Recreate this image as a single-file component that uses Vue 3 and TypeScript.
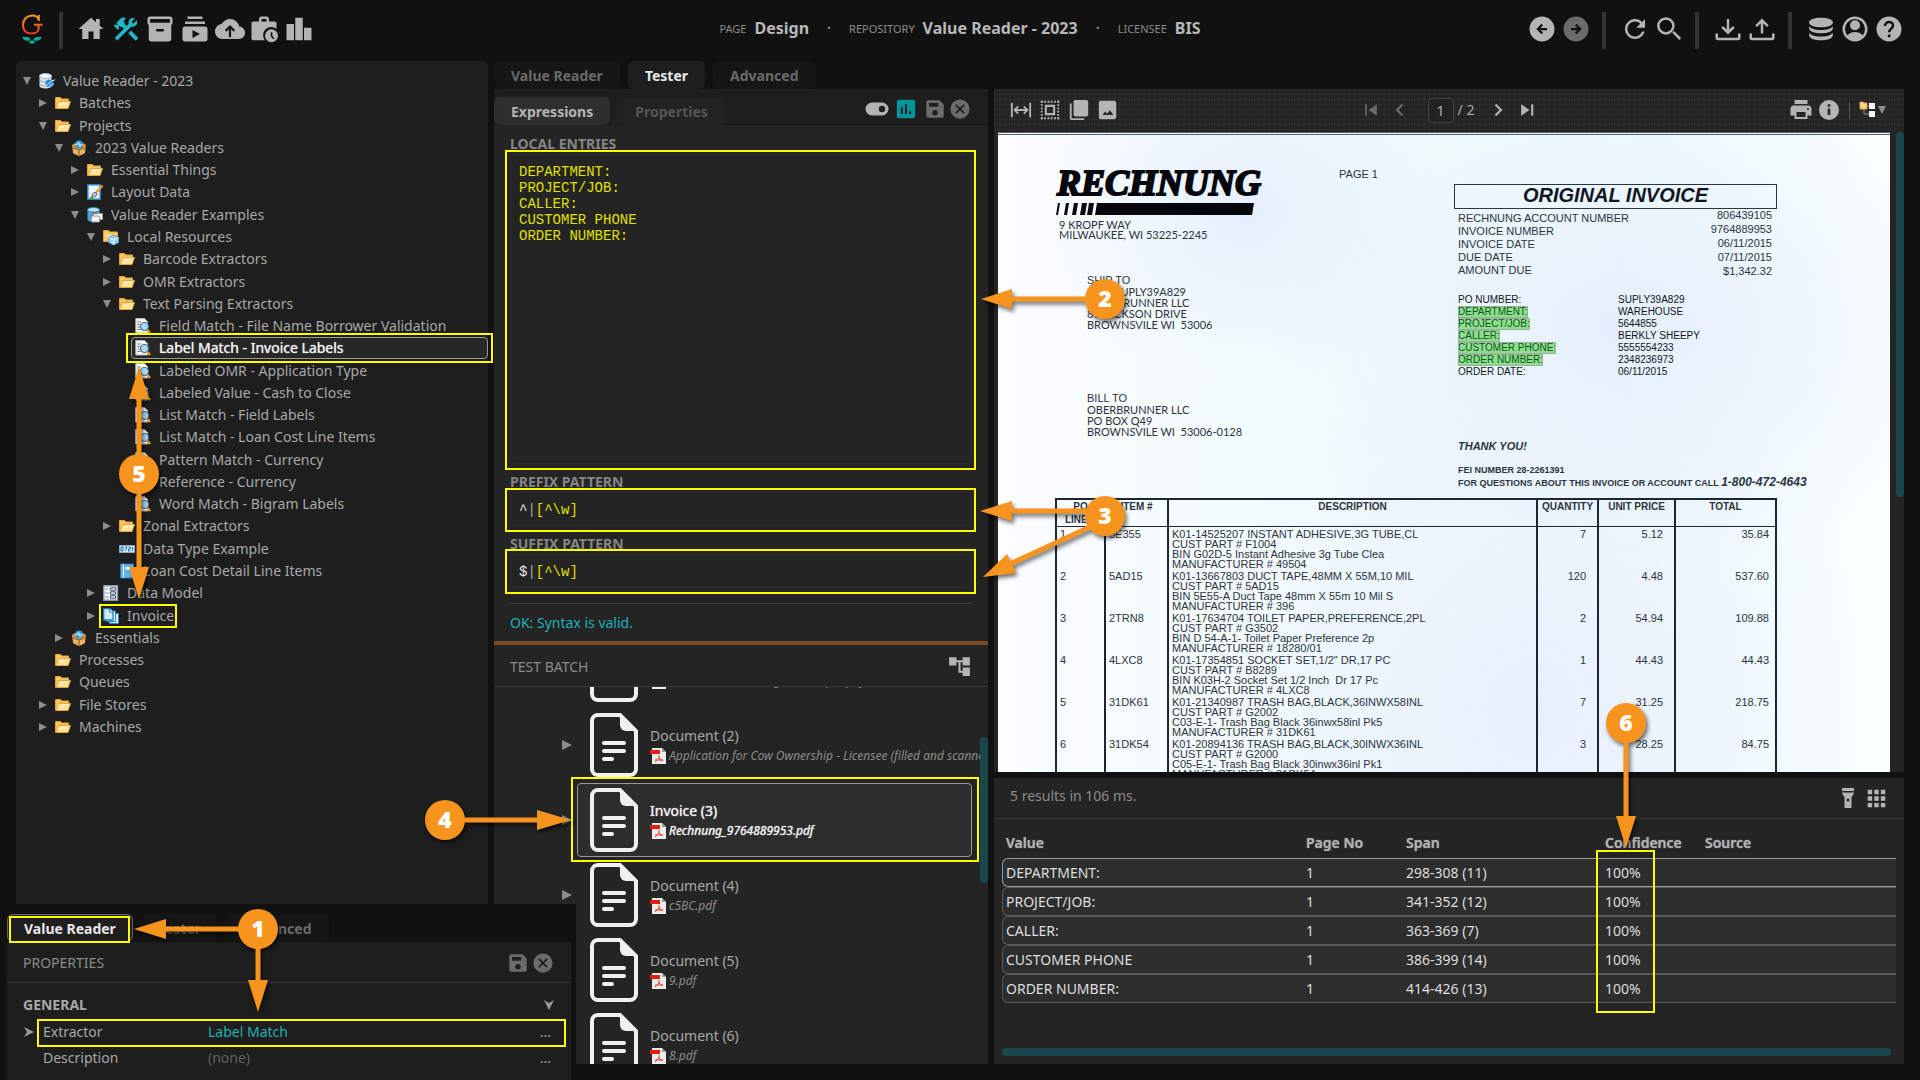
<script setup lang="ts">
import { ref } from 'vue'

interface TreeNode {
  label: string
  level: number
  icon: string
  state?: 'open' | 'closed'
  selected?: boolean
}

const tree: TreeNode[] = [
  { label: 'Value Reader - 2023', level: 0, icon: 'repo', state: 'open' },
  { label: 'Batches', level: 1, icon: 'folder', state: 'closed' },
  { label: 'Projects', level: 1, icon: 'folder', state: 'open' },
  { label: '2023 Value Readers', level: 2, icon: 'box', state: 'open' },
  { label: 'Essential Things', level: 3, icon: 'folder', state: 'closed' },
  { label: 'Layout Data', level: 3, icon: 'paint', state: 'closed' },
  { label: 'Value Reader Examples', level: 3, icon: 'model', state: 'open' },
  { label: 'Local Resources', level: 4, icon: 'local', state: 'open' },
  { label: 'Barcode Extractors', level: 5, icon: 'folder', state: 'closed' },
  { label: 'OMR Extractors', level: 5, icon: 'folder', state: 'closed' },
  { label: 'Text Parsing Extractors', level: 5, icon: 'folder', state: 'open' },
  { label: 'Field Match - File Name Borrower Validation', level: 6, icon: 'reader' },
  { label: 'Label Match - Invoice Labels', level: 6, icon: 'reader', selected: true },
  { label: 'Labeled OMR - Application Type', level: 6, icon: 'reader' },
  { label: 'Labeled Value - Cash to Close', level: 6, icon: 'reader' },
  { label: 'List Match - Field Labels', level: 6, icon: 'reader' },
  { label: 'List Match - Loan Cost Line Items', level: 6, icon: 'reader' },
  { label: 'Pattern Match - Currency', level: 6, icon: 'reader' },
  { label: 'Reference - Currency', level: 6, icon: 'reader' },
  { label: 'Word Match - Bigram Labels', level: 6, icon: 'reader' },
  { label: 'Zonal Extractors', level: 5, icon: 'folder', state: 'closed' },
  { label: 'Data Type Example', level: 5, icon: 'digits' },
  { label: 'Loan Cost Detail Line Items', level: 5, icon: 'book' },
  { label: 'Data Model', level: 4, icon: 'form', state: 'closed' },
  { label: 'Invoice', level: 4, icon: 'pages', state: 'closed' },
  { label: 'Essentials', level: 2, icon: 'box', state: 'closed' },
  { label: 'Processes', level: 1, icon: 'folder' },
  { label: 'Queues', level: 1, icon: 'folder' },
  { label: 'File Stores', level: 1, icon: 'folder', state: 'closed' },
  { label: 'Machines', level: 1, icon: 'folder', state: 'closed' },
]

const treeArt: Record<string, string> = {
  folder:
    '<path d="M.5 13.5v-11h5l1 1.500h7v3" fill="#f7c75a" stroke="#e9a23b"/><path d="M3.500 6.500h12l-2.500 7H.8z" fill="#ffe39a" stroke="#e9a23b"/><path d="M5 9.500l3-.5 2-1.500h4" stroke="#fff6d8" fill="none"/>',
  repo:
    '<path d="M.5 3v10c0 3.300 12 3.300 12 0V3" fill="#dde4ec"/><ellipse cx="6.500" cy="3" rx="6" ry="2.500" fill="#f5f8fb" stroke="#aab4c0"/><path d="M.5 7c1 2.500 11 2.500 12 0M.5 11c1 2.500 8 2.500 9 1.500" stroke="#9aa6b4" fill="none"/><circle cx="10.500" cy="10.500" r="4" fill="#2e8bd8"/><path d="M7 13l7-6M9 14.500l6-4M14 8l2-1.500M7 13l-1 2" stroke="#d8ecfb" fill="none"/>',
  box:
    '<path d="M1 5l3-2 4 3 4-3 3 2-1 8-6 3-6-3z" fill="#d9953d"/><path d="M2 8l6 2 6-2v5l-6 3-6-3z" fill="#e9b266"/><path d="M8 10v6M2 8l6 2 6-2" stroke="#8f5a1c" fill="none"/><circle cx="8" cy="4.500" r="4" fill="#2c9be0"/><path d="M4.500 4.500h2l1-2 1.500 4 1-2h1.500" stroke="#fff" fill="none"/>',
  paint:
    '<path d="M.8.8h12.400v14.400H.8z" fill="#eef7ff" stroke="#2384c6" stroke-width="1.500"/><path d="M15.500 1.500L8 10" stroke="#e89a2a" stroke-width="2.400"/><path d="M8.500 8.500c-2.500 0-3.500 2-4 4.500 3 0 5-.5 5.500-3z" fill="#bcd0dd" stroke="#557"/><path d="M1 15l3.500-3 3 3z" fill="#53b32b"/>',
  model:
    '<path d="M.5 2.500v10c0 3 12 3 12 0v-10" fill="#4aa7dd"/><ellipse cx="6.500" cy="2.800" rx="6" ry="2.300" fill="#bde2f6" stroke="#2a86bf"/><path d="M6.500 6.500h9v6h-9z" fill="#fff" stroke="#999"/><path d="M4.500 9h8v6h-8z" fill="#f2f2f2" stroke="#999"/><path d="M5 7.500l3-1.500 2 1" stroke="#e03c2c" fill="none"/>',
  local:
    '<path d="M.5 12.500v-11h5l1 1.500h8v9.500z" fill="#f9cc63" stroke="#e9a23b"/><path d="M2 6.500h11" stroke="#fff0bf"/><path d="M5.500 8.500l5-2.500 5 2.500v5l-5 2.500-5-2.500z" fill="#9fd0f3" stroke="#4d9ad4"/><path d="M5.500 8.500l5 2.500 5-2.500M10.500 11v5" stroke="#e8f5ff" fill="none"/>',
  reader:
    '<path d="M.8.5h8.700l3 3v11.500H.8z" fill="#f4f4f4" stroke="#b5b5b5"/><path d="M2.500 4h3M2.500 6.500h2.500M2.500 9h2.500M2.500 11.500h3" stroke="#6f7780"/><circle cx="9.500" cy="8.500" r="4" fill="#a9dbf7" stroke="#4c6f86" stroke-width="1.200"/><path d="M12.500 12l2.500 3" stroke="#f39a1f" stroke-width="2.400"/>',
  digits:
    '<path d="M.5 4.500h15v7H.5z" fill="#dcecfa" stroke="#8aa9c6"/><path d="M2 6h2v4H2zM5.500 6H8L6.500 10M9.500 6h1.800v2H9.500v2h2M13.500 6v4" stroke="#1c6fb4" fill="none"/>',
  book:
    '<path d="M1.500 1h13v14h-13z" fill="#5fb4ee" stroke="#2579bd"/><path d="M4.500 1v14" stroke="#fff"/><path d="M6.500 4h7v2.500h-7z" fill="#fff"/>',
  form:
    '<path d="M.8.8h13.700v14.400H.8z" fill="#f3f5f9" stroke="#8b97ae" stroke-width="1.400"/><path d="M2.500 4h3M2.500 8h3M2.500 12h3" stroke="#7a869c"/><path d="M7.500 2.800h5v2.400h-5zM7.500 6.800h5v2.400h-5zM7.500 10.800h5v2.400h-5z" fill="#fff" stroke="#3b4a66"/>',
  pages:
    '<path d="M6.500 5.500h9v10h-9z" fill="#dff0fb" stroke="#2384c6"/><path d="M3.500 3h9v10.500h-9z" fill="#e9f5fd" stroke="#2384c6"/><path d="M.7.7h6.300l3 3v8.300H.7z" fill="#d3eafa" stroke="#1d7cc0" stroke-width="1.300"/><path d="M6.500.7V4H10" stroke="#1d7cc0" fill="#fff"/>',
}

const navIcons = [
  { name: 'Home', art: '<path d="M10 20v-6h4v6h5v-8h3l-3-2.700V4h-3v2.600L12 3 2 12h3v8z"/>' },
  {
    name: 'Design',
    active: true,
    art: '<path d="M13.780 15.300L19.780 21.300L21.890 19.140L15.890 13.140L13.780 15.300M17.500 10.100C17.110 10.100 16.690 10.050 16.360 9.910L4.970 21.250L2.860 19.140L10.270 11.740L8.500 9.960L7.780 10.660L6.330 9.250V12.110L5.630 12.810L2.110 9.250L2.810 8.550H5.620L4.220 7.140L7.780 3.580C8.950 2.410 10.830 2.410 12 3.580L9.890 5.740L11.300 7.140L10.590 7.850L12.380 9.630L14.200 7.750C14.060 7.420 14 7 14 6.630C14 4.660 15.560 3.110 17.500 3.110C18.090 3.110 18.610 3.250 19.080 3.530L16.410 6.200L17.910 7.700L20.580 5.030C20.860 5.500 21 6 21 6.630C21 8.550 19.450 10.100 17.500 10.100Z"/>',
  },
  {
    name: 'Batches',
    art: '<path d="M20 2H4c-1 0-2 .9-2 2v3.010c0 .72.43 1.340 1 1.690V20c0 1.100 1.100 2 2 2h14c.9 0 2-.9 2-2V8.700c.57-.35 1-.97 1-1.690V4c0-1.100-1-2-2-2zm-5 12H9v-2h6v2zm5-7H4V4l16-.02V7z"/>',
  },
  {
    name: 'Tasks',
    art: '<path d="M20 8H4V6h16v2zm-2-6H6v2h12V2zm4 10v8c0 1.100-.9 2-2 2H4c-1.100 0-2-.9-2-2v-8c0-1.100.9-2 2-2h16c1.100 0 2 .9 2 2zm-6 4l-6-3.270v6.530L16 16z"/>',
  },
  {
    name: 'Imports',
    art: '<path d="M19.350 10.040C18.670 6.590 15.640 4 12 4 9.110 4 6.600 5.640 5.350 8.040 2.340 8.360 0 10.910 0 14c0 3.310 2.690 6 6 6h13c2.760 0 5-2.240 5-5 0-2.640-2.050-4.780-4.650-4.960z"/><path d="M12 18.500v-7.500M8.500 13.500L12 10l3.500 3.500" fill="none" stroke="#111" stroke-width="1.700"/>',
  },
  {
    name: 'Jobs',
    art: '<path d="M3.500 6H8V4c0-1.100.9-2 2-2h4c1.100 0 2 .9 2 2v2h4.500c1 0 1.500.7 1.500 1.500V12a6.500 6.500 0 0 0-9.300 9H3.500C2.600 21 2 20.400 2 19.500v-12C2 6.600 2.600 6 3.500 6zM10 4v2h4V4z" fill-rule="evenodd"/><path d="M18 12.200a5.200 5.200 0 1 0 0 10.400 5.200 5.200 0 0 0 0-10.400zm-.6 2.300h1.300v3l1.700 1.800-.9.900-2.100-2.200z" fill-rule="evenodd"/>',
  },
  { name: 'Stats', art: '<path d="M2 8h6v13H2zM9 3h6v18H9zM16 11h6v10h-6z"/>' },
]

const art: Record<string, string> = {
  back: '<path d="M12 2a10 10 0 1 0 0 20 10 10 0 0 0 0-20z"/><path d="M16 12H9m3.200-3.500L8.700 12l3.500 3.500" fill="none" stroke="#111" stroke-width="1.800"/>',
  forward:
    '<path d="M12 2a10 10 0 1 0 0 20 10 10 0 0 0 0-20z"/><path d="M8 12h7m-3.200-3.500l3.500 3.500-3.500 3.500" fill="none" stroke="#111" stroke-width="1.800"/>',
  refresh:
    '<path d="M17.650 6.350C16.200 4.900 14.210 4 12 4c-4.420 0-7.990 3.580-7.990 8s3.570 8 7.990 8c3.730 0 6.840-2.550 7.730-6h-2.080c-.82 2.330-3.040 4-5.650 4-3.310 0-6-2.690-6-6s2.690-6 6-6c1.660 0 3.140.69 4.220 1.780L13 11h7V4l-2.350 2.350z"/>',
  search: '<path d="M15.300 14.300L21 20M9.500 3.500a6 6 0 1 0 0 12 6 6 0 0 0 0-12z" fill="none" stroke="currentColor" stroke-width="2"/>',
  download:
    '<path d="M3 15.500v3.500c0 .6.4 1 1 1h16c.6 0 1-.4 1-1v-3.500M12 4v10.500M7.300 10.300L12 15l4.700-4.700" fill="none" stroke="currentColor" stroke-width="2"/>',
  upload:
    '<path d="M3 15.500v3.500c0 .6.4 1 1 1h16c.6 0 1-.4 1-1v-3.500M12 15.500V5M7.300 9.700L12 5l4.700 4.700" fill="none" stroke="currentColor" stroke-width="2"/>',
  database:
    '<path d="M12 3c5.500 0 9.500 1.500 9.500 3.700S17.500 10.500 12 10.500 2.500 9 2.500 6.700 6.500 3 12 3z"/><path d="M2.500 9.500c1 2 4.500 3.200 9.500 3.200s8.500-1.200 9.500-3.200v1.800c0 2.400-4 4-9.500 4s-9.500-1.600-9.500-4z"/><path d="M2.500 14.700c1 2 4.500 3.200 9.500 3.200s8.500-1.200 9.500-3.200v2c0 2.600-4 4.300-9.500 4.300s-9.500-1.700-9.500-4.300z"/>',
  user: '<path d="M12 3a9 9 0 1 0 0 18 9 9 0 0 0 0-18z" fill="none" stroke="currentColor" stroke-width="2"/><circle cx="12" cy="9" r="4"/><path d="M5 18c2-2.700 4.500-3.700 7-3.700s5 1 7 3.700l-3 2.500-4 1-4-1z"/>',
  help: '<path d="M12 2a10 10 0 1 0 0 20 10 10 0 0 0 0-20z"/><path d="M8.800 9.500c0-1.900 1.400-3.100 3.200-3.100s3.200 1.200 3.200 2.900c0 2.200-3.100 2.700-3.100 5.200M12.100 16.300v2.200" fill="none" stroke="#111" stroke-width="2"/>',
  fit: '<path d="M2 4v16M22 4v16M5 12h14M9 8l-4 4 4 4M15 8l4 4-4 4" fill="none" stroke="currentColor" stroke-width="2"/>',
  select:
    '<path d="M2 3h20M2 21h20" fill="none" stroke="currentColor" stroke-width="2" stroke-dasharray="2 1.600"/><path d="M3 2v20M21 2v20" fill="none" stroke="currentColor" stroke-width="2" stroke-dasharray="2 1.600"/><path d="M7.500 7.500h9v9h-9z" fill="none" stroke="currentColor" stroke-width="2.200"/>',
  copy: '<path d="M8 1h12c1 0 2 .9 2 2v14c0 1.100-1 2-2 2H8c-1 0-2-.9-2-2V3c0-1.100 1-2 2-2z"/><path d="M3 5v16c0 .6.400 1 1 1h13.500" fill="none" stroke="currentColor" stroke-width="2"/>',
  image:
    '<path d="M21 19V5c0-1.700-.9-3-2-3H4C2.900 2 2 2.900 2 4v16c0 1.100.9 2 2 2h15c1.100 0 2-.9 2-3zM6 17.500l3-4 2 2.700 3-4 4 5.300z"/>',
  first: '<path d="M5 5h2v14H5zM19 5v14l-10-7z"/>',
  prev: '<path d="M15 5.500L8.500 12l6.500 6.500" fill="none" stroke="currentColor" stroke-width="2.600"/>',
  next: '<path d="M9 5.500l6.500 6.500L9 18.500" fill="none" stroke="currentColor" stroke-width="2.600"/>',
  last: '<path d="M17 5h2.500v14H17zM5 5v14l10-7z"/>',
  print:
    '<path d="M5.500 2h13v4h-13zM19.500 7.500h-15C3 7.500 1.500 9 1.500 11v6.500h4V21h13v-3.500h4V11c0-2-1.500-3.500-3-3.500zM16.500 19h-9v-5h9zM19 12a1 1 0 1 1 0-2 1 1 0 0 1 0 2z" fill-rule="evenodd"/>',
  info: '<path d="M12 2a10 10 0 1 0 0 20 10 10 0 0 0 0-20zm1.300 15h-2.600v-6.500h2.600zm0-8.300h-2.600V6.200h2.600z"/>',
  toggle:
    '<path d="M7 5.500h10a6.500 6.500 0 0 1 0 13H7a6.500 6.500 0 0 1 0-13zm10 3.300a3.200 3.200 0 1 0 0 6.400 3.200 3.200 0 0 0 0-6.400z" fill-rule="evenodd"/>',
  chart:
    '<path d="M4 2h16c1.100 0 2 .9 2 2v16c0 1.100-.9 2-2 2H4c-1.100 0-2-.9-2-2V4c0-1.100.9-2 2-2z"/><path d="M7.500 17.500V10M12 17.500V6.500M16.500 17.500v-3" stroke="#1e1e1e" stroke-width="2.200"/>',
  save: '<path d="M17 2.500H4.500c-1.100 0-2 .9-2 2v15c0 1.100.9 2 2 2h15c1.100 0 2-.9 2-2V7zM12 19a3 3 0 1 1 0-6 3 3 0 0 1 0 6zm3.500-9.500H5.500v-4h10z"/>',
  close:
    '<path d="M12 1.500a10.500 10.500 0 1 0 0 21 10.500 10.500 0 0 0 0-21z"/><path d="M7.500 7.500l9 9M16.500 7.500l-9 9" stroke="#1e1e1e" stroke-width="2"/>',
  hierarchy: '<path d="M22 11V3h-7v3H9V3H2v8h7V8h2v10h4v3h7v-8h-7v3h-2V8h2v3z"/>',
  torch: '<path d="M6 2h12v3H6zM6 6.500h12c0 2.500-2.500 3-2.500 5.500v10h-7V12C8.500 9.500 6 9 6 6.500zm6 6a1.500 1.500 0 1 0 0 3 1.500 1.500 0 0 0 0-3z"/>',
  dots: '<path d="M2 2h5v5H2zM9.500 2h5v5h-5zM17 2h5v5h-5zM2 9.500h5v5H2zM9.500 9.500h5v5h-5zM17 9.500h5v5h-5zM2 17h5v5H2zM9.500 17h5v5h-5zM17 17h5v5h-5z"/>',
}

const utilityGroups = [
  [{ id: 'back', name: 'Back' }, { id: 'forward', name: 'Forward', dim: true }],
  [{ id: 'refresh', name: 'Refresh' }, { id: 'search', name: 'Search' }],
  [{ id: 'download', name: 'Download' }, { id: 'upload', name: 'Upload' }],
  [{ id: 'database', name: 'Repositories' }, { id: 'user', name: 'Account' }, { id: 'help', name: 'Help' }],
]

const entries = ref('DEPARTMENT:\nPROJECT/JOB:\nCALLER:\nCUSTOMER PHONE\nORDER NUMBER:')
const pageNo = ref('1')

const documents = [
  { title: 'Document (1)', file: 'Account and Lending Review (p1).pdf' },
  { title: 'Document (2)', file: 'Application for Cow Ownership - Licensee (filled and scanned).pdf' },
  { title: 'Invoice (3)', file: 'Rechnung_9764889953.pdf', selected: true },
  { title: 'Document (4)', file: 'c5BC.pdf' },
  { title: 'Document (5)', file: '9.pdf' },
  { title: 'Document (6)', file: '8.pdf' },
]

const results = [
  ['DEPARTMENT:', '1', '298-308 (11)', '100%', ''],
  ['PROJECT/JOB:', '1', '341-352 (12)', '100%', ''],
  ['CALLER:', '1', '363-369 (7)', '100%', ''],
  ['CUSTOMER PHONE', '1', '386-399 (14)', '100%', ''],
  ['ORDER NUMBER:', '1', '414-426 (13)', '100%', ''],
]

const summaryLabels = ['RECHNUNG ACCOUNT NUMBER', 'INVOICE NUMBER', 'INVOICE DATE', 'DUE DATE', 'AMOUNT DUE']
const summaryValues = ['806439105', '9764889953', '06/11/2015', '07/11/2015', '$1,342.32']

const orderFields = [
  { label: 'PO NUMBER:', value: 'SUPLY39A829' },
  { label: 'DEPARTMENT:', value: 'WAREHOUSE', hit: true },
  { label: 'PROJECT/JOB:', value: '5644855', hit: true },
  { label: 'CALLER:', value: 'BERKLY SHEEPY', hit: true },
  { label: 'CUSTOMER PHONE:', value: '5555554233', hit: true },
  { label: 'ORDER NUMBER:', value: '2348236973', hit: true },
  { label: 'ORDER DATE:', value: '06/11/2015' },
]

const lines = [
  { no: '1', item: '5E355', desc: ['K01-14525207 INSTANT ADHESIVE,3G TUBE,CL', 'CUST PART # F1004', 'BIN G02D-5 Instant Adhesive 3g Tube Clea', 'MANUFACTURER # 49504'], qty: '7', price: '5.12', total: '35.84' },
  { no: '2', item: '5AD15', desc: ['K01-13667803 DUCT TAPE,48MM X 55M,10 MIL', 'CUST PART # 5AD15', 'BIN 5E55-A Duct Tape 48mm X 55m 10 Mil S', 'MANUFACTURER # 396'], qty: '120', price: '4.48', total: '537.60' },
  { no: '3', item: '2TRN8', desc: ['K01-17634704 TOILET PAPER,PREFERENCE,2PL', 'CUST PART # G3502', 'BIN D 54-A-1- Toilet Paper Preference 2p', 'MANUFACTURER # 18280/01'], qty: '2', price: '54.94', total: '109.88' },
  { no: '4', item: '4LXC8', desc: ['K01-17354851 SOCKET SET,1/2" DR,17 PC', 'CUST PART # B8289', 'BIN K03H-2 Socket Set 1/2 Inch  Dr 17 Pc', 'MANUFACTURER # 4LXC8'], qty: '1', price: '44.43', total: '44.43' },
  { no: '5', item: '31DK61', desc: ['K01-21340987 TRASH BAG,BLACK,36INWX58INL', 'CUST PART # G2002', 'C03-E-1- Trash Bag Black 36inwx58inl Pk5', 'MANUFACTURER # 31DK61'], qty: '7', price: '31.25', total: '218.75' },
  { no: '6', item: '31DK54', desc: ['K01-20894136 TRASH BAG,BLACK,30INWX36INL', 'CUST PART # G2000', 'C05-E-1- Trash Bag Black 30inwx36inl Pk1', 'MANUFACTURER # 31DK54'], qty: '3', price: '28.25', total: '84.75' },
]

const frames = [
  [127, 334, 365, 28],
  [100, 605, 76, 22],
  [506, 151, 469, 318],
  [506, 489, 469, 42],
  [506, 550, 469, 43],
  [572, 778, 406, 83],
  [1597, 851, 57, 161],
  [10, 917, 119, 25],
  [38, 1020, 527, 26],
]

const shafts = [
  'M258 929H160', 'M258 929V985',
  'M1105 299H1006',
  'M1105 511H1006', 'M1105 520L1010 564',
  'M445 820H542',
  'M139 474V394', 'M139 474V572',
  'M1626 723V821',
]
const heads = [
  'M134 929l32-10v20z', 'M258 1012l-10-32h20z',
  'M981 299l31-10v20z',
  'M980 511l32-10v20z', 'M983 577l24-23 9 19z',
  'M571 820l-34-10v20z',
  'M139 367l-10 32h20z', 'M139 599l-10-32h20z',
  'M1626 848l-10-32h20z',
]
const callouts = [
  { n: 1, x: 258, y: 929 },
  { n: 2, x: 1105, y: 299 },
  { n: 3, x: 1105, y: 516 },
  { n: 4, x: 445, y: 820 },
  { n: 5, x: 139, y: 474 },
  { n: 6, x: 1626, y: 723 },
]
</script>

<template>
  <div class="app">
    <header class="topbar">
      <div class="top-left">
        <svg class="logo" viewBox="0 0 22 30" aria-label="Grooper">
          <defs>
            <linearGradient id="g-fill" x1="0" y1="0" x2="0" y2="1">
              <stop offset="0" stop-color="#f9a11b" />
              <stop offset="1" stop-color="#ee3524" />
            </linearGradient>
          </defs>
          <path
            d="M17.500 5.500C16.500 2.800 14.300 1.600 11.500 1.600 6.500 1.600 2 5 2 11s3.500 8.600 8.500 8.600c3.500 0 7-1.600 7-4.600V11M13 10.800h8.500M17.800 1v6"
            fill="none" stroke="url(#g-fill)" stroke-width="2"
          />
          <path d="M1 23h6l3 2-3 2-4-1zM21 23h-6l-3 2 3 2 4-1zM7 28l4-2 4 2-4 2z" fill="#12a594" />
        </svg>
        <span class="bar first"></span>
        <nav class="nav" aria-label="Main">
          <button v-for="i in navIcons" :key="i.name" class="icon-btn" :class="{ active: i.active }" :aria-label="i.name">
            <svg viewBox="0 0 24 24" width="30" height="30" fill="currentColor" v-html="i.art"></svg>
          </button>
        </nav>
      </div>
      <div class="crumbs">
        <small>PAGE</small><b>Design</b><i>•</i><small>REPOSITORY</small><b>Value Reader - 2023</b><i>•</i><small>LICENSEE</small><b>BIS</b>
      </div>
      <div class="top-right">
        <template v-for="(g, gi) in utilityGroups" :key="gi">
          <span v-if="gi" class="bar"></span>
          <div class="group">
            <button v-for="i in g" :key="i.id" class="icon-btn" :class="{ dim: i.dim }" :aria-label="i.name">
              <svg viewBox="0 0 24 24" width="30" height="30" fill="currentColor" v-html="art[i.id]"></svg>
            </button>
          </div>
        </template>
      </div>
    </header>

    <main class="main">
      <section class="tree-panel">
        <ul class="tree" role="tree">
          <li v-for="n in tree" :key="n.label" role="treeitem" :style="{ paddingLeft: n.level * 16 + 'px' }">
            <button v-if="n.state" class="twisty" :aria-label="n.state">
              <svg width="9" height="8" viewBox="0 0 9 8" fill="#8c8c8c"><path :d="n.state === 'open' ? 'M0 0h8l-4 8z' : 'M0 0v8l8-4z'" /></svg>
            </button>
            <span v-else class="twisty"></span>
            <a href="#" class="node" :class="{ selected: n.selected }">
              <svg width="16" height="16" viewBox="0 0 16 16" v-html="treeArt[n.icon]"></svg>
              <span>{{ n.label }}</span>
            </a>
          </li>
        </ul>
      </section>

      <section class="middle">
        <div class="tabs">
          <button class="tab">Value Reader</button>
          <button class="tab on">Tester</button>
          <button class="tab">Advanced</button>
        </div>
        <div class="editor">
          <div class="subbar">
            <button class="tab sub on">Expressions</button>
            <button class="tab sub">Properties</button>
            <div class="tools">
              <button class="icon-btn" aria-label="Toggle"><svg viewBox="0 0 24 24" width="24" height="24" fill="currentColor" v-html="art.toggle"></svg></button>
              <button class="icon-btn teal" aria-label="Chart"><svg viewBox="0 0 24 24" width="22" height="22" fill="currentColor" v-html="art.chart"></svg></button>
              <button class="icon-btn dim gap" aria-label="Save"><svg viewBox="0 0 24 24" width="22" height="22" fill="currentColor" v-html="art.save"></svg></button>
              <button class="icon-btn dim" aria-label="Cancel"><svg viewBox="0 0 24 24" width="22" height="22" fill="currentColor" v-html="art.close"></svg></button>
            </div>
          </div>
          <div class="fields">
            <label for="entries">LOCAL ENTRIES</label>
            <textarea id="entries" v-model="entries" class="code" spellcheck="false"></textarea>
            <span id="prefix-label" class="label">PREFIX PATTERN</span>
            <div class="code line" role="textbox" contenteditable="true" spellcheck="false" aria-labelledby="prefix-label"><b>^</b><i>|</i>[^\w]</div>
            <span id="suffix-label" class="label">SUFFIX PATTERN</span>
            <div class="code line" role="textbox" contenteditable="true" spellcheck="false" aria-labelledby="suffix-label"><b>$</b><i>|</i>[^\w]</div>
            <p class="status">OK: Syntax is valid.</p>
          </div>
        </div>
        <div class="splitter"></div>
        <div class="batch">
          <div class="batch-head">
            <span>TEST BATCH</span>
            <button class="icon-btn" aria-label="Browse batches"><svg viewBox="0 0 24 24" width="25" height="25" fill="currentColor" v-html="art.hierarchy"></svg></button>
          </div>
          <div class="batch-body">
            <div class="scroll">
              <ul class="docs">
                <li v-for="d in documents" :key="d.title">
                  <button class="twisty" aria-label="Expand"><svg width="10" height="10" viewBox="0 0 10 10" fill="#8c8c8c"><path d="M0 0l10 5-10 5z" /></svg></button>
                  <a href="#" class="doc" :class="{ selected: d.selected }">
                    <svg width="48" height="64" viewBox="0 0 48 64" fill="none" stroke="#f0f0f0" stroke-width="4">
                      <path d="M30 2H8a6 6 0 0 0-6 6v48a6 6 0 0 0 6 6h32a6 6 0 0 0 6-6V18z" />
                      <path d="M30 2l16 16H36a6 6 0 0 1-6-6z" fill="#f0f0f0" stroke="none" />
                      <path d="M14 30h20M14 38h20M14 46h8" stroke-linecap="round" />
                    </svg>
                    <span class="doc-text">
                      <span class="doc-title">{{ d.title }}</span>
                      <span class="doc-file">
                        <svg width="16" height="16" viewBox="0 0 16 16">
                          <path d="M2 0h10l4 4v12H2z" fill="#ececec" /><path d="M12 0v4h4z" fill="#999" />
                          <path d="M0 2h10v4H0z" fill="#e02010" />
                          <path d="M5 14l4-4V7M9 10l4 3M5 12l8 0" stroke="#e0402c" fill="none" />
                        </svg>
                        <em>{{ d.file }}</em>
                      </span>
                    </span>
                  </a>
                </li>
              </ul>
            </div>
            <div class="track"><span class="thumb doc-thumb"></span></div>
          </div>
        </div>
      </section>

      <section class="right">
        <div class="viewer">
          <div class="viewbar">
            <div class="vb-left">
              <button v-for="k in ['fit', 'select', 'copy', 'image']" :key="k" class="icon-btn" :aria-label="k">
                <svg viewBox="0 0 24 24" width="22" height="22" fill="currentColor" v-html="art[k]"></svg>
              </button>
            </div>
            <div class="pager">
              <button class="icon-btn dim" aria-label="First page"><svg viewBox="0 0 24 24" width="20" height="20" fill="currentColor" v-html="art.first"></svg></button>
              <button class="icon-btn dim" aria-label="Previous page"><svg viewBox="0 0 24 24" width="20" height="20" fill="currentColor" v-html="art.prev"></svg></button>
              <input v-model="pageNo" aria-label="Page" />
              <span>/ 2</span>
              <button class="icon-btn" aria-label="Next page"><svg viewBox="0 0 24 24" width="20" height="20" fill="currentColor" v-html="art.next"></svg></button>
              <button class="icon-btn" aria-label="Last page"><svg viewBox="0 0 24 24" width="20" height="20" fill="currentColor" v-html="art.last"></svg></button>
            </div>
            <div class="vb-right">
              <button class="icon-btn" aria-label="Print"><svg viewBox="0 0 24 24" width="24" height="24" fill="currentColor" v-html="art.print"></svg></button>
              <button class="icon-btn" aria-label="Info"><svg viewBox="0 0 24 24" width="24" height="24" fill="currentColor" v-html="art.info"></svg></button>
              <span class="thin"></span>
              <button class="view-menu" aria-label="View">
                <svg width="28" height="18" viewBox="0 0 28 18">
                  <path d="M1 1h3l1 1h3v6H1z" fill="#ffd98a" stroke="#e79a2b" /><path d="M5 8v5h5M8 5h3" stroke="#999" fill="none" />
                  <path d="M10 2h6v6h-6zM10 10h6v6h-6z" fill="#f4f4f4" /><path d="M19 5h8l-4 8z" fill="#8c8c8c" />
                </svg>
              </button>
            </div>
          </div>
          <div class="view-body">
            <article class="sheet">
              <div class="sheet-top">
                <div class="s-left">
                  <div class="s-brand">
                    <div>
                      <h1>RECHNUNG</h1>
                      <svg width="198" height="12" viewBox="0 0 198 12" fill="#05070c">
                        <path d="M2 0h2l-2 12H0zM10 0h3l-2 12H8zM18 0h4l-2 12h-4zM26 0h5l-2 12h-5zM33 0h5l-2 12h-5zM41 0h157l-2 12H39z" />
                      </svg>
                    </div>
                    <span class="s-page">PAGE 1</span>
                  </div>
                  <address class="from">9 KROPF WAY<br />MILWAUKEE, WI 53225-2245</address>
                  <address class="ship"><span>SHIP TO</span><br />PO # SUPLY39A829<br />OBERBRUNNER LLC<br />89 JACKSON DRIVE<br />BROWNSVILE WI &nbsp;53006</address>
                  <address class="bill"><span>BILL TO</span><br />OBERBRUNNER LLC<br />PO BOX Q49<br />BROWNSVILE WI &nbsp;53006-0128</address>
                </div>
                <div class="s-right">
                  <h2>ORIGINAL INVOICE</h2>
                  <div class="summary">
                    <ul><li v-for="l in summaryLabels" :key="l">{{ l }}</li></ul>
                    <ul class="nums"><li v-for="v in summaryValues" :key="v">{{ v }}</li></ul>
                  </div>
                  <dl class="order">
                    <template v-for="f in orderFields" :key="f.label">
                      <dt><span :class="{ hit: f.hit }">{{ f.label }}</span></dt>
                      <dd>{{ f.value }}</dd>
                    </template>
                  </dl>
                  <p class="thanks">THANK YOU!</p>
                  <p class="fine">FEI NUMBER <span>28-2261391</span></p>
                  <p class="fine">FOR QUESTIONS ABOUT THIS INVOICE OR ACCOUNT CALL <em>1-800-472-4643</em></p>
                </div>
              </div>
              <table class="items">
                <colgroup><col class="c1" /><col class="c2" /><col /><col class="c4" /><col class="c5" /><col class="c6" /></colgroup>
                <thead>
                  <tr><th class="po">PO<br />LINE #</th><th>ITEM #</th><th>DESCRIPTION</th><th>QUANTITY</th><th>UNIT PRICE</th><th>TOTAL</th></tr>
                </thead>
                <tbody>
                  <tr v-for="l in lines" :key="l.no">
                    <td>{{ l.no }}</td>
                    <td>{{ l.item }}</td>
                    <td class="desc"><div v-for="t in l.desc" :key="t">{{ t }}</div></td>
                    <td class="n1">{{ l.qty }}</td>
                    <td class="n1">{{ l.price }}</td>
                    <td class="n2">{{ l.total }}</td>
                  </tr>
                </tbody>
              </table>
            </article>
            <div class="track"><span class="thumb page-thumb"></span></div>
          </div>
        </div>

        <div class="results">
          <div class="results-head">
            <span>5 results in 106 ms.</span>
            <button class="icon-btn" aria-label="Highlight"><svg viewBox="0 0 24 24" width="24" height="24" fill="currentColor" v-html="art.torch"></svg></button>
            <button class="icon-btn" aria-label="Grid"><svg viewBox="0 0 24 24" width="21" height="21" fill="currentColor" v-html="art.dots"></svg></button>
          </div>
          <table class="grid">
            <colgroup><col class="g1" /><col class="g2" /><col class="g3" /><col class="g2" /><col /></colgroup>
            <thead><tr><th>Value</th><th>Page No</th><th>Span</th><th>Confidence</th><th>Source</th></tr></thead>
            <tbody>
              <tr v-for="r in results" :key="r[0]"><td v-for="(c, ci) in r" :key="ci">{{ c }}</td></tr>
            </tbody>
          </table>
          <span class="thumb h-thumb"></span>
        </div>
      </section>
    </main>

    <aside class="inset">
      <div class="tabs">
        <button class="tab on outlined">Value Reader</button>
        <button class="tab">Tester</button>
        <button class="tab">Advanced</button>
      </div>
      <div class="props">
        <div class="props-head">
          <span>PROPERTIES</span>
          <button class="icon-btn dim" aria-label="Save"><svg viewBox="0 0 24 24" width="22" height="22" fill="currentColor" v-html="art.save"></svg></button>
          <button class="icon-btn dim" aria-label="Cancel"><svg viewBox="0 0 24 24" width="22" height="22" fill="currentColor" v-html="art.close"></svg></button>
        </div>
        <div class="props-group">
          <b>GENERAL</b>
          <svg width="10" height="10" viewBox="0 0 10 10" fill="#9a9a9a"><path d="M0 0l5 3 5-3-5 10z" /></svg>
        </div>
        <div class="prop">
          <svg width="10" height="10" viewBox="0 0 10 10" fill="#9a9a9a"><path d="M0 0l10 5-10 5 3-5z" /></svg>
          <span class="name">Extractor</span><span class="val link">Label Match</span><button class="more" aria-label="Edit extractor">...</button>
        </div>
        <div class="prop">
          <span class="pad"></span>
          <span class="name">Description</span><span class="val">(none)</span><button class="more" aria-label="Edit description">...</button>
        </div>
      </div>
    </aside>

    <svg class="notes" width="1920" height="1080" viewBox="0 0 1920 1080">
      <rect v-for="(f, i) in frames" :key="i" :x="f[0]" :y="f[1]" :width="f[2]" :height="f[3]" fill="none" stroke="#ffff00" stroke-width="2" />
      <g class="marks">
        <path v-for="s in shafts" :key="s" :d="s" stroke="#f7941e" stroke-width="5" />
        <path v-for="h in heads" :key="h" :d="h" fill="#f7941e" />
        <circle v-for="c in callouts" :key="c.n" :cx="c.x" :cy="c.y" r="20" fill="#f7941e" />
      </g>
      <text v-for="c in callouts" :key="c.n" :x="c.x" :y="c.y + 8" text-anchor="middle">{{ c.n }}</text>
    </svg>
  </div>
</template>

<style>
body {
  background: #111;
}
</style>

<style scoped>
.app {
  position: relative;
  height: 100vh;
  display: flex;
  flex-direction: column;
  overflow: hidden;
  background: #111;
  color: #a8a8a8;
  font: 14px/20px 'Noto Sans', 'Open Sans', sans-serif;
}
.app *,
.app *::before {
  box-sizing: border-box;
}
ul,
dl,
dd,
p,
h1,
h2 {
  margin: 0;
  padding: 0;
  list-style: none;
}
button {
  border: 0;
  padding: 0;
  background: none;
  color: inherit;
  font: inherit;
}
a {
  color: inherit;
  text-decoration: none;
}
svg {
  display: block;
  flex: none;
}
.icon-btn {
  display: flex;
  color: #b4b4b4;
}
.icon-btn.dim {
  color: #6b6b6b;
}
.icon-btn.active {
  color: #1fb8c4;
}
.icon-btn.teal {
  color: #00959c;
}

/* top bar */
.topbar {
  flex: none;
  height: 61px;
  padding: 0 16px;
  display: grid;
  grid-template-columns: 1fr auto 1fr;
}
.top-left,
.top-right,
.group {
  display: flex;
  align-items: center;
}
.top-left,
.top-right {
  height: 58px;
}
.top-right {
  justify-content: flex-end;
}
.group {
  gap: 4px;
}
.logo {
  width: 22px;
  height: 30px;
  margin: 0 16px 0 5px;
}
.bar {
  width: 4px;
  height: 37px;
  margin: 2px 14px 0 11px;
  background: #333;
}
.bar.first {
  margin: 2px 13px 0 0;
}
.nav {
  display: flex;
  justify-content: space-between;
  width: 238px;
}
.crumbs {
  display: flex;
  align-items: center;
  height: 56px;
  white-space: nowrap;
}
.crumbs small {
  font-size: 11px;
  color: #8c8c8c;
  margin-right: 8px;
  padding-top: 2px;
}
.crumbs b {
  font-size: 16px;
  color: #b8b8b8;
}
.crumbs i {
  width: 40px;
  text-align: center;
  font-size: 8px;
  font-style: normal;
}

/* columns */
.main {
  flex: 1;
  min-height: 0;
  display: grid;
  grid-template-columns: minmax(0, 472fr) minmax(0, 494fr) minmax(0, 910fr);
  gap: 6px;
  padding: 0 16px 16px;
}
.tree-panel {
  background: #1e1e1e;
  border-radius: 6px;
  padding-top: 9px;
  overflow: hidden;
}
.tree {
  height: 668px;
  padding-left: 7px;
  display: flex;
  flex-direction: column;
}
.tree li {
  flex: 1;
  min-height: 0;
  display: flex;
  align-items: center;
}
.twisty {
  flex: none;
  width: 12px;
}
.node {
  flex: 1;
  height: 22px;
  display: flex;
  align-items: center;
  gap: 8px;
  padding-left: 3px;
  border: 1px solid transparent;
  border-radius: 4px;
  white-space: nowrap;
}
.node.selected {
  border-color: #999;
  background: #272727;
  color: #f2f2f2;
  text-shadow: 0 0 1px currentColor;
}

/* tabs */
.tabs {
  flex: none;
  display: flex;
  gap: 8px;
  height: 28px;
}
.tab {
  height: 28px;
  padding: 2px 17px 0;
  border-radius: 6px;
  background: #161616;
  color: #6a6a6a;
  font-weight: 700;
}
.tab.on {
  background: #1e1e1e;
  color: #e8e8e8;
}
.tab.sub {
  margin-right: 8px;
  background: #222;
  color: #555;
}
.tab.sub.on {
  background: #2e2e2e;
  color: #b4b4b4;
}
.tab.outlined {
  border: 1px solid #666;
  padding: 2px 16px 0;
}
.middle,
.right {
  display: flex;
  flex-direction: column;
  min-height: 0;
}
.editor {
  flex: 552 1 0;
  min-height: 0;
  display: flex;
  flex-direction: column;
  background: #242424;
}
.subbar {
  flex: none;
  display: flex;
  height: 36px;
  padding-top: 8px;
  background: #1e1e1e;
  border-bottom: 1px solid #181818;
}
.tools {
  margin-left: auto;
  margin-top: -4px;
  padding-right: 17px;
  display: flex;
  align-items: center;
  gap: 6px;
}
.tools .gap {
  margin-left: 1px;
}
.tools .icon-btn:last-child {
  margin-left: -3px;
}
.fields {
  flex: 1;
  min-height: 0;
  display: flex;
  flex-direction: column;
  padding: 1px 16px 0;
}
.fields label,
.fields .label {
  flex: none;
  height: 28px;
  line-height: 35px;
  font-weight: 700;
  color: #858585;
}
.code {
  margin: 0;
  border: 1px solid #2b2b2b;
  border-radius: 6px;
  background: #242424;
  color: #e0e000;
  font: 14px/16px 'Courier New', 'Liberation Mono', monospace;
  resize: none;
  outline: none;
}
textarea.code {
  flex: 1;
  min-height: 0;
  padding: 9px 8px;
}
.code.line {
  flex: none;
  height: 34px;
  padding: 9px 8px 0;
}
.code b {
  color: #e8e8e8;
  font-weight: 400;
}
.code i {
  color: #a8a8a8;
  font-style: normal;
}
.status {
  flex: none;
  height: 38px;
  margin-top: 15px;
  padding-top: 9px;
  border-top: 1px solid #3c3c3c;
  color: #1fb0b8;
}
.splitter {
  flex: none;
  height: 4px;
  background: #7a4b26;
}
.batch {
  flex: 419 1 0;
  min-height: 0;
  display: flex;
  flex-direction: column;
  background: #242424;
}
.batch-head {
  flex: none;
  height: 42px;
  padding: 2px 16px 0;
  display: flex;
  align-items: center;
  justify-content: space-between;
  border-bottom: 1px solid #383838;
  color: #8a8a8a;
}
.batch-body {
  flex: 1;
  min-height: 0;
  display: flex;
}
.scroll {
  flex: 1;
  min-width: 0;
  overflow: hidden;
}
.docs {
  margin-top: -54px;
  padding: 0 8px 0 68px;
}
.docs li {
  display: flex;
  align-items: center;
  margin-bottom: 1px;
}
.docs .twisty {
  width: 15px;
}
.doc {
  flex: 1;
  min-width: 0;
  height: 74px;
  display: flex;
  align-items: center;
  gap: 12px;
  padding-left: 12px;
  border: 1px solid transparent;
  border-radius: 4px;
  white-space: nowrap;
}
.doc.selected {
  border-color: #999;
  background: #2d2d2d;
  color: #f2f2f2;
  text-shadow: 0 0 1px currentColor;
}
.doc-text,
.doc-file {
  display: flex;
}
.doc-text {
  flex-direction: column;
  padding-top: 2px;
}
.doc-file {
  gap: 3px;
  align-items: center;
  height: 20px;
  font-size: 12px;
  color: #8a8a8a;
}
.selected .doc-file {
  color: #f2f2f2;
}
.track {
  flex: none;
  width: 8px;
  display: flex;
  flex-direction: column;
}
.thumb {
  display: block;
  border-radius: 4px;
  background: #19474b;
}
.doc-thumb {
  height: 146px;
  margin-top: 50px;
}

/* viewer */
.right {
  padding-top: 28px;
  gap: 6px;
}
.viewer {
  flex: 683 1 0;
  min-height: 0;
  display: flex;
  flex-direction: column;
  background: #242424;
}
.viewbar {
  flex: none;
  height: 43px;
  padding: 0 16px;
  display: grid;
  grid-template-columns: 1fr auto 1fr;
  align-items: center;
  background-color: #232323;
  background-image: linear-gradient(#2b2b2b 1px, transparent 1px), linear-gradient(90deg, #2b2b2b 1px, transparent 1px);
  background-size: 5px 5px;
}
.vb-left,
.pager,
.vb-right {
  display: flex;
  align-items: center;
  padding-bottom: 1px;
}
.vb-left {
  gap: 7px;
}
.pager {
  gap: 9px;
}
.pager input {
  width: 26px;
  height: 25px;
  margin-left: 9px;
  padding: 0;
  border: 1px solid #444;
  border-radius: 4px;
  background: #222;
  color: #b4b4b4;
  text-align: center;
  font: inherit;
}
.pager span {
  margin: 0 5px 0 -5px;
}
.vb-right {
  justify-content: flex-end;
  gap: 4px;
}
.thin {
  width: 1px;
  height: 17px;
  margin: 0 4px;
  background: #555;
}
.view-menu {
  padding: 0 1px;
  background: #282828;
  border-radius: 4px;
}
.view-body {
  flex: 1;
  min-height: 0;
  display: flex;
  padding-left: 4px;
}
.sheet {
  flex: 1;
  min-width: 0;
  margin-right: 6px;
  padding: 0 113px 0 57px;
  overflow: hidden;
  border-top: 3px double #55606e;
  background:
    radial-gradient(ellipse at 28% 12%, #e6effc 0, transparent 22%),
    radial-gradient(ellipse at 70% 30%, #e6effd 0, transparent 40%),
    radial-gradient(ellipse at 60% 90%, #e9effd 0, transparent 45%),
    linear-gradient(90deg, #fbfdff, #f1fbfd 40%, #f0fbfd 75%, #fbffff);
  color: #2c3442;
  font: 11px/13px 'Liberation Sans', Arial, sans-serif;
  white-space: nowrap;
}
.sheet-top {
  display: grid;
  grid-template-columns: minmax(0, 399fr) minmax(0, 323fr);
}
.s-brand {
  display: flex;
  justify-content: space-between;
  padding: 30px 76px 0 1px;
}
h1 {
  padding-left: 1px;
  margin-bottom: 2px;
  font: italic 700 36px/36px 'Liberation Serif', 'Times New Roman', serif;
  color: #05070c;
  -webkit-text-stroke: 2px #05070c;
}
.s-page {
  padding-top: 3px;
}
address {
  font: 11px/11px Lato, 'Noto Sans', sans-serif;
  padding-left: 32px;
}
address span {
  font-family: 'Liberation Sans', Arial, sans-serif;
}
.from {
  padding: 5px 0 0 4px;
  line-height: 10px;
}
.ship {
  margin-top: 34px;
}
.bill {
  margin-top: 62px;
}
.s-right {
  padding-top: 49px;
}
h2 {
  height: 25px;
  border: 1px solid #2c3442;
  text-align: center;
  font: italic 700 20px/20px 'Liberation Sans', Arial, sans-serif;
  color: #10151f;
}
.summary {
  display: flex;
  justify-content: space-between;
  padding: 0 5px 0 4px;
}
.summary ul {
  padding-top: 3px;
}
.summary ul.nums {
  padding-top: 0;
  margin-top: -1px;
  line-height: 14px;
  text-align: right;
}
.order {
  display: grid;
  grid-template-columns: 160px 1fr;
  margin-top: 16px;
  padding-left: 4px;
  font-size: 10px;
  line-height: 12px;
  color: #10151f;
}
.hit {
  display: inline-block;
  height: 12px;
  background: #8be08b;
  color: #14531f;
  outline: 1px solid #9db09d;
  outline-offset: -1px;
}
.thanks {
  margin-top: 62px;
  padding-left: 4px;
  font-style: italic;
  font-weight: 700;
  line-height: 12px;
}
.fine {
  padding-left: 4px;
  font-size: 9px;
  font-weight: 700;
  line-height: 12px;
}
.thanks + .fine {
  margin-top: 12px;
}
.fine em {
  font-size: 12px;
  line-height: 12px;
}
.items {
  width: 100%;
  margin-top: 9px;
  table-layout: fixed;
  border-collapse: collapse;
  border: 2px solid #1c2634;
}
.c1 { width: 49px; }
.c2 { width: 63px; }
.c4 { width: 61px; }
.c5 { width: 77px; }
.c6 { width: 101px; }
.items th,
.items td {
  padding: 0 3px;
  border-left: 2px solid #1c2634;
  vertical-align: top;
  text-align: left;
}
.items th {
  height: 26px;
  padding: 0;
  border-bottom: 1px solid #1c2634;
  font-size: 10px;
  line-height: 13px;
  text-align: center;
  white-space: nowrap;
}
.items td {
  height: 42px;
  padding-top: 2px;
  line-height: 10px;
}
.items td.desc {
  padding-bottom: 0;
  white-space: pre;
}
.items td.n1 {
  padding-right: 11px;
  text-align: right;
}
.items td.n2 {
  padding-right: 6px;
  text-align: right;
}
.page-thumb {
  height: 365px;
}

/* results */
.results {
  flex: 286 1 0;
  min-height: 0;
  display: flex;
  flex-direction: column;
  background: #242424;
}
.results-head {
  flex: none;
  display: flex;
  align-items: center;
  gap: 6px;
  height: 41px;
  padding: 0 17px 0 16px;
  border-bottom: 1px solid #363636;
}
.results-head span {
  flex: 1;
  padding-bottom: 4px;
  color: #8a8a8a;
}
.grid {
  margin: 8px 8px 0;
  table-layout: fixed;
  border-collapse: separate;
  border-spacing: 0;
}
.g1 { width: 300px; }
.g2 { width: 100px; }
.g3 { width: 199px; }
.grid th {
  height: 31px;
  padding: 0 4px;
  text-align: left;
  font-weight: 600;
  color: #b0b0b0;
  text-shadow: 0 0 1px currentColor;
}
.grid td {
  height: 29px;
  padding: 0 4px;
  border-top: 1px solid #5a5a5a;
  border-bottom: 1px solid #5a5a5a;
  background: #2d2d2d;
  color: #dedede;
}
.grid td:first-child {
  border-left: 1px solid #5a5a5a;
  border-radius: 6px 0 0 6px;
  padding-left: 3px;
}
.grid tbody tr:first-child td {
  border-color: #999;
}
.h-thumb {
  flex: none;
  height: 8px;
  margin: auto 13px 8px 8px;
}

/* overlaid properties pane */
.inset {
  position: absolute;
  left: 0;
  bottom: 0;
  width: 30%;
  height: 176px;
  padding: 10px 5px 0 7px;
  background: #111;
}
.props {
  height: 138px;
  background: #1e1e1e;
}
.props-head {
  display: flex;
  align-items: center;
  gap: 3px;
  height: 41px;
  padding: 2px 17px 0 16px;
  border-bottom: 1px solid #333;
  color: #8a8a8a;
}
.props-head span {
  flex: 1;
}
.props-group {
  display: flex;
  align-items: center;
  justify-content: space-between;
  height: 26px;
  margin: 9px 0 1px;
  padding: 0 17px 0 16px;
}
.prop {
  display: flex;
  align-items: center;
  height: 26px;
  padding: 0 20px 0 17px;
}
.pad {
  width: 10px;
}
.name {
  width: 165px;
  margin-left: 9px;
}
.val {
  flex: 1;
  color: #606060;
}
.val.link {
  color: #1fb0b8;
}

/* callout layer */
.notes {
  position: absolute;
  left: 0;
  top: 0;
  pointer-events: none;
}
.marks {
  filter: drop-shadow(2px 3px 2px rgba(0, 0, 0, 0.55));
}
.notes text {
  fill: #fff;
  font: 800 23px 'Open Sans', 'Noto Sans', sans-serif;
}
</style>
